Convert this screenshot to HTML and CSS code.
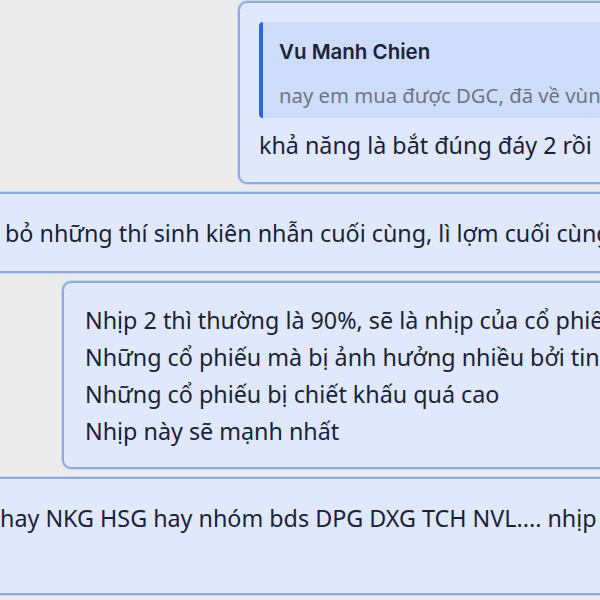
FILE: index.html
```
<!DOCTYPE html>
<html lang="vi">
<head>
    <meta charset="UTF-8">
    <meta name="viewport" content="width=device-width, initial-scale=1.0">
    <title>Chat</title>
    <link rel="stylesheet" href="styles.css">
</head>
<body>
    <div class="chat">
        <div class="msg out reply">
            <div class="quote">
                <div class="quote-name">Vu Manh Chien</div>
                <div class="quote-text">nay em mua được DGC, đã về vùng mua chưa anh</div>
            </div>
            <div class="text">khả năng là bắt đúng đáy 2 rồi</div>
        </div>

        <div class="msg wide">
            <div class="text">bỏ những thí sinh kiên nhẫn cuối cùng, lì lợm cuối cùng</div>
        </div>

        <div class="msg out list">
            <div class="text">Nhịp 2 thì thường là 90%, sẽ là nhịp của cổ phiếu</div>
            <div class="text">Những cổ phiếu mà bị ảnh hưởng nhiều bởi tin tức</div>
            <div class="text">Những cổ phiếu bị chiết khấu quá cao</div>
            <div class="text">Nhịp này sẽ mạnh nhất</div>
        </div>

        <div class="msg wide last">
            <div class="text">hay NKG HSG hay nhóm bds DPG DXG TCH NVL.... nhịp này</div>
        </div>
    </div>
</body>
</html>
```

FILE: styles.css
```
body {
    margin: 0;
    background-color: #ebebeb;
    font-family: "Noto Sans", "Open Sans", sans-serif;
    color: #19223a;
    width: 600px;
    height: 600px;
    overflow: hidden;
}
.chat {
    display: flex;
    flex-direction: column;
    gap: 8px;
    padding-top: 1px;
}
.msg {
    background-color: #dfe9fb;
    border: 2px solid #8dabe3;
    border-radius: 9px;
    box-shadow: 0 0 0 1px #c9d7f0;
    white-space: nowrap;
    overflow: hidden;
}
.text {
    font-size: 23.3px;
    line-height: 37px;
}

/* messages that go off the right edge */
.out {
    align-self: flex-start;
    width: 600px;
}
.reply {
    margin-left: 238px;
    padding: 19px 0 18px 19px;
}
.quote {
    background-color: #cddcf8;
    border-left: 4px solid #2c66df;
    border-radius: 4px 0 0 4px;
    padding: 16px 0 8px 16px;
    margin-bottom: 9px;
}
.quote-name {
    font-family: Inter, sans-serif;
    font-weight: 600;
    font-size: 20.5px;
    line-height: 28px;
    margin-bottom: 14px;
    color: #1a2438;
}
.quote-text {
    font-size: 20.3px;
    line-height: 30px;
    color: #6d7585;
}
.list {
    margin-left: 62px;
    padding: 19px 0 17px 21px;
}

/* messages wider than the view */
.wide {
    margin-left: -20px;
    margin-right: -20px;
    padding: 21px 0 19px 23px;
}
.last {
    margin-left: -24px;
    padding: 21px 0 56px 22px;
}
```
